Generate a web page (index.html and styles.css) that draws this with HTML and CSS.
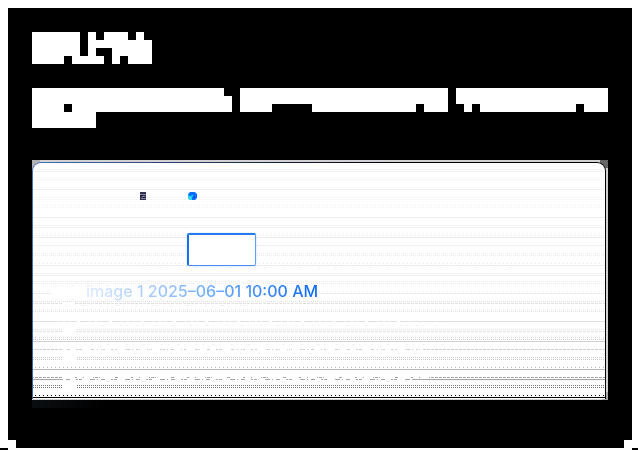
FILE: index.html
```html
<!DOCTYPE html>
<html lang="en">
<head>
<meta charset="utf-8">
<meta name="viewport" content="width=device-width">
<title>image 1</title>
<link rel="stylesheet" href="styles.css">
</head>
<body>
<main class="panel">
  <svg class="blocks" width="120" height="32" viewBox="0 0 15 4" aria-hidden="true">
    <path d="M0 0h6v3H4v1H0zM7 0h1v1h7v3h-3V3h-1v1h-1V2H8v1h1v1H5V3h2zM9 0h3v1H9zM13 0h1v1h-1z"/>
  </svg>
  <svg class="blocks" width="576" height="40" viewBox="0 0 72 5" aria-hidden="true">
    <path d="M0 0h24v1h1v2H5V2H4v1h4v2H0zM26 0h26v3h-3V2h-1v1H35V2h-5v1h-4zM53 0h19v3h-3V2h-1v1H56V2h-1v1h-1V2h-1z"/>
  </svg>
  <section class="card">
    <div class="frame">
      <div class="sheet">
        <svg class="rules" width="100%" height="236" aria-hidden="true">
          <g transform="translate(-2 -163.5)">
            <g stroke="#f2f2f2">
              <path class="dash" d="M0 170h2000M0 200h2000"/>
              <path d="M0 172h2000M0 190h2000"/>
              <path class="dots" d="M0 178h2000M0 180h2000M0 198h2000M0 208h2000"/>
              <path class="sparse" d="M0 188h2000M0 206h2000"/>
            </g>
            <g stroke="#ececec">
              <path d="M0 218h2000M0 238h2000M0 266h2000M0 276h2000M0 294h2000"/>
              <path class="dash" d="M0 228h2000M0 246h2000M0 274h2000"/>
              <path class="dots" d="M0 226h2000M0 236h2000M0 254h2000M0 256h2000M0 282h2000M0 284h2000"/>
              <path class="sparse" d="M0 234h2000M0 264h2000M0 292h2000"/>
            </g>
            <g stroke="#e0e0e0">
              <path class="dots" d="M0 302h2000M0 312h2000M0 330h2000"/>
              <path class="dash" d="M0 304h2000M0 332h2000"/>
              <path class="sparse" d="M0 310h2000"/>
              <path d="M0 322h2000"/>
            </g>
            <g stroke="#cecece">
              <path class="sparse" d="M0 338h2000"/>
              <path class="dots" d="M0 340h2000M0 358h2000M0 360h2000"/>
              <path d="M0 342h2000"/>
              <path class="dash" d="M0 350h2000"/>
            </g>
            <g stroke="#b8b8b8">
              <path class="sparse" d="M0 368h2000"/>
              <path d="M0 370h2000"/>
            </g>
            <g stroke="#a5a5a5">
              <path class="dash" d="M0 378h2000"/>
              <path d="M0 380h2000"/>
            </g>
            <path class="dots" stroke="#777" d="M0 386h2000M0 388h2000"/>
            <path class="sparse" stroke="#000" d="M0 396h2000"/>
            <path stroke="#000" d="M0 398h2000"/>
            <g class="gaps" stroke="#fff">
              <path d="M32 322h350"/>
              <path class="gaps-b" d="M32 350h360M32 380h350"/>
              <path class="gaps-c" d="M31 378h370"/>
              <path class="wipe" d="M31 304h12M31 330h14M31 332h14M31 358h14M31 360h14M31 386h14M31 388h14M20 294h264M20 292h264"/>
            </g>
            <path class="specks" stroke="#f1f1f1" d="M22 282h62M24 286h58M24 300h190M34 306h190M54 326h360M60 345h355M52 354h360M60 382h350M112 268h380"/>
          </g>
        </svg>
        <div class="marks">
          <svg width="6" height="8" viewBox="0 0 6 8" aria-hidden="true">
            <path fill="#303052" d="M0 0h6v8H0z"/><path fill="#8b86a6" d="M0 2h6v1H0zM2 4h3v1H2zM1 6h5v1H1z"/><path fill="#181936" d="M0 3h3v1H0zM3 5h3v1H3z"/>
          </svg>
          <svg width="9" height="8" viewBox="0 0 9 8" aria-hidden="true">
            <path fill="#0a6dff" d="M2 0h5l2 2v4L7 8H2L0 6V2z"/><path fill="#29d9f2" d="M0 4h3v1h1v3H2L0 6z"/><path fill="#08b5ff" d="M3 3h3v1H5v1H3zM0 2h1v2H0z"/><path fill="#0048df" d="M5 4h2v2H5z"/>
          </svg>
        </div>
        <div class="selection"></div>
        <p class="caption">image 1 2025–06–01 10:00 AM</p>
      </div>
    </div>
  </section>
  <div class="glow"></div>
</main>
<div class="edge"><span class="edge-left"></span><span class="edge-right"></span></div>
</body>
</html>
```
FILE: styles.css
```css
* {
  box-sizing: border-box;
}

body {
  margin: 0;
  background: #fff;
  font-family: Inter, "Liberation Sans", sans-serif;
}

.panel {
  display: flex;
  flex-direction: column;
  margin: 8px 6px 0 8px;
  padding: 24px 24px 40px;
  background:
    linear-gradient(#fff, #fff) left bottom / 8px 8px no-repeat,
    linear-gradient(#fff, #fff) right bottom / 8px 8px no-repeat,
    #000;
}

.blocks {
  max-width: 100%;
  margin-bottom: 24px;
  fill: #fff;
  shape-rendering: crispEdges;
}

.card {
  margin-top: 8px;
  padding: 2px 2px 1px 0;
  background:
    linear-gradient(#b0b0b4, #b0b0b4) left top / 8px 8px no-repeat,
    linear-gradient(#666, #666) right top / 8px 8px no-repeat,
    linear-gradient(#aaa, #aaa) right bottom / 6px 8px no-repeat,
    #d3d0d3;
}

.frame {
  padding: 1px 1px 0;
  border-radius: 9px 9px 0 0;
  background: linear-gradient(100deg, #4472b5, #1c2c49 35%, #000 60%);
}

.sheet {
  position: relative;
  overflow: hidden;
  padding: 29px 24px 96px 53px;
  border-radius: 8px 8px 0 0;
  background: #fff;
}

.rules {
  position: absolute;
  inset: 0;
  fill: none;
  shape-rendering: crispEdges;
}

.dash {
  stroke-dasharray: 3 1;
}

.dots {
  stroke-dasharray: 1 1;
}

.sparse {
  stroke-dasharray: 1 3;
}

.gaps {
  stroke-dasharray: 2 4 1 7 3 9 1 5;
}

.gaps-b {
  stroke-dasharray: 3 4 6 2 1 3 8 5 2 1;
}

.gaps-c {
  stroke-dasharray: 12 3 5 2 9 7 14 4;
}

.wipe {
  stroke-dasharray: none;
}

.specks {
  stroke-dasharray: 2 5 1 8 3 4 1 11;
}

.marks {
  position: relative;
  display: flex;
  gap: 42px;
  padding-left: 54px;
}

.marks svg {
  display: block;
}

.selection {
  position: relative;
  width: 69px;
  height: 33px;
  margin: 33px 0 0 101px;
  border: 2px solid;
  border-color: #2878ee #5b9aff #498cf0 #176fe9;
  border-right-width: 1px;
  border-bottom-width: 1px;
  border-radius: 2px;
  background: #fff;
  box-shadow: 0 0 2px #a9d8ff;
}

.caption {
  position: relative;
  width: max-content;
  margin: 13px 0 0;
  background: linear-gradient(90deg, #deebff, #a8cbff 28%, #66a6ff 58%, #0968f7);
  background-clip: text;
  color: transparent;
  font-size: 16px;
  font-weight: 500;
  line-height: 24px;
}

.glow {
  width: 72px;
  height: 8px;
  background: linear-gradient(90deg, #0b0e11, #000);
}

.edge {
  display: flex;
  justify-content: space-between;
  height: 2px;
}

.edge-left {
  width: 8px;
  background: #000;
}

.edge-right {
  width: 6px;
  background: #000;
}
```
